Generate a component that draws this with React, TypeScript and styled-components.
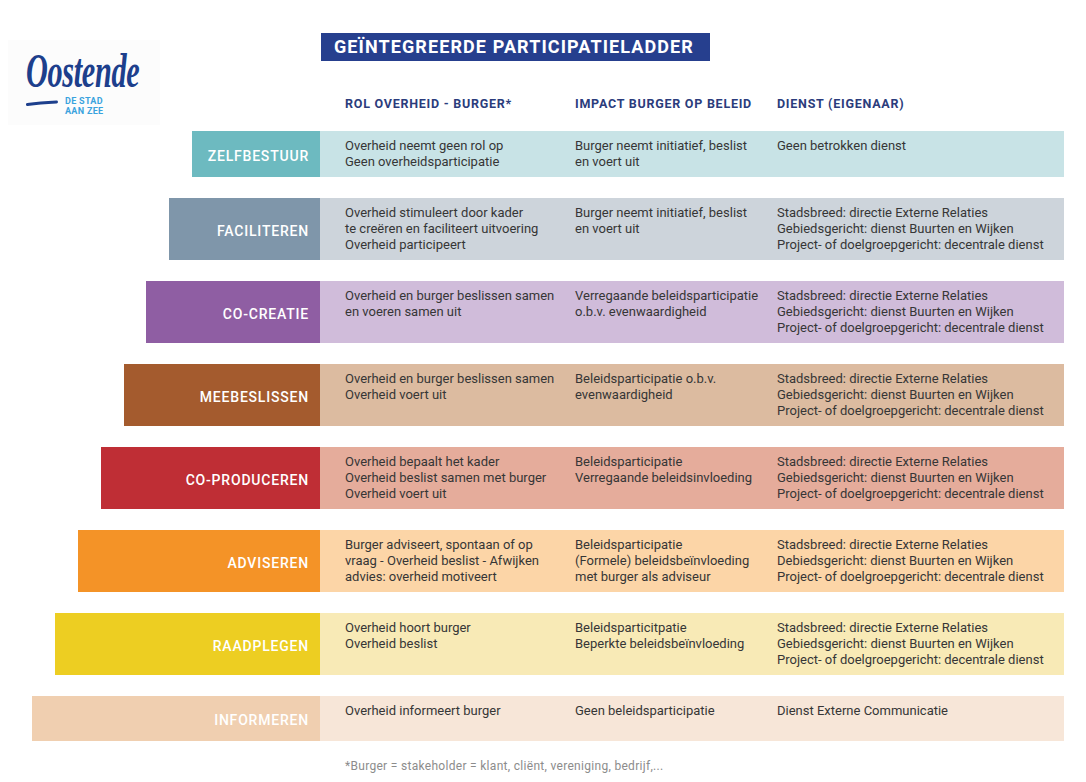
import React from "react";
import styled, { createGlobalStyle } from "styled-components";

const Global = createGlobalStyle`
  html, body { margin: 0; padding: 0; background: #ffffff; }
  body { font-family: Roboto, "Noto Sans", sans-serif; }
`;

const Page = styled.div`
  width: 1086px;
  height: 782px;
  display: flex;
  flex-direction: column;
  box-sizing: border-box;
`;

const Header = styled.div`
  height: 132px;
  display: flex;
`;

const LogoBox = styled.div`
  width: 152px;
  height: 85px;
  margin: 40px 0 0 8px;
  background: #fcfcfc;
  display: flex;
  flex-direction: column;
  align-items: flex-start;
  padding: 10px 0 0 18px;
  box-sizing: border-box;
`;

const LogoWord = styled.div`
  font-family: "Liberation Serif", "DejaVu Serif", serif;
  font-style: italic;
  font-weight: 700;
  font-size: 48px;
  line-height: 42px;
  letter-spacing: -0.5px;
  color: #1d3f8c;
  transform: scaleX(0.63);
  transform-origin: left center;
  white-space: nowrap;
`;

const LogoBottom = styled.div`
  display: flex;
  align-items: flex-start;
  gap: 7px;
  margin-top: 5px;
`;

const LogoSwoosh = styled.svg`
  display: block;
  margin-top: 3px;
`;

const LogoTag = styled.div`
  font-family: Roboto, sans-serif;
  font-weight: 700;
  font-size: 9px;
  line-height: 9.5px;
  letter-spacing: 0.3px;
  color: #3aa3de;
`;

const HeaderRight = styled.div`
  margin-left: 160px;
  display: flex;
  flex-direction: column;
`;

const Title = styled.h1`
  margin: 33px 0 0 1px;
  width: 389px;
  height: 28px;
  box-sizing: border-box;
  padding-left: 13px;
  background: #263f8e;
  color: #ffffff;
  font-family: Roboto, sans-serif;
  font-weight: 700;
  font-size: 18px;
  line-height: 28px;
  letter-spacing: 1.1px;
  white-space: nowrap;
`;

const ColHeads = styled.div`
  margin-top: 35px;
  display: grid;
  grid-template-columns: 230px 202px 312px;
`;

const ColHead = styled.div`
  padding-left: 25px;
  font-family: Roboto, sans-serif;
  font-weight: 700;
  font-size: 12.5px;
  line-height: 16px;
  letter-spacing: 0.75px;
  color: #2b3c7c;
  white-space: nowrap;
`;

const Rows = styled.div`
  display: flex;
  flex-direction: column;
  gap: 21px;
`;

const Row = styled.div<{ $first?: boolean; $h: number }>`
  display: flex;
  height: ${(p) => p.$h}px;
  margin-top: ${(p) => (p.$first ? "-1px" : "0")};
`;

const LabelSlot = styled.div`
  width: 320px;
  display: flex;
  justify-content: flex-end;
`;

const Label = styled.div<{ $w: number; $c: string }>`
  width: ${(p) => p.$w}px;
  background: ${(p) => p.$c};
  display: flex;
  align-items: center;
  justify-content: flex-end;
  padding: 3px 11px 0 0;
  box-sizing: border-box;
  color: #ffffff;
  font-family: Roboto, sans-serif;
  font-weight: 500;
  font-size: 14px;
  letter-spacing: 0.8px;
  white-space: nowrap;
`;

const Content = styled.div<{ $bg: string }>`
  width: 744px;
  background: ${(p) => p.$bg};
  display: grid;
  grid-template-columns: 230px 202px 312px;
`;

const Cell = styled.div`
  padding: 7px 0 0 25px;
  font-family: Roboto, sans-serif;
  font-size: 13px;
  line-height: 16px;
  letter-spacing: 0px;
  color: #363636;
  white-space: nowrap;
`;

const Footnote = styled.div`
  margin: 17px 0 0 345px;
  font-family: Roboto, sans-serif;
  font-size: 12px;
  line-height: 16px;
  letter-spacing: 0.3px;
  color: #8c8c8c;
`;

type RowData = {
  label: string;
  w: number;
  c: string;
  bg: string;
  h: number;
  cols: string[][];
};

const SB = [
  "Stadsbreed: directie Externe Relaties",
  "Gebiedsgericht: dienst Buurten en Wijken",
  "Project- of doelgroepgericht: decentrale dienst",
];

const rows: RowData[] = [
  {
    label: "ZELFBESTUUR",
    w: 128,
    c: "#6dbac0",
    bg: "#c8e3e6",
    h: 46,
    cols: [
      ["Overheid neemt geen rol op", "Geen overheidsparticipatie"],
      ["Burger neemt initiatief, beslist", "en voert uit"],
      ["Geen betrokken dienst"],
    ],
  },
  {
    label: "FACILITEREN",
    w: 151,
    c: "#7f96aa",
    bg: "#cdd4db",
    h: 62,
    cols: [
      ["Overheid stimuleert door kader", "te creëren en faciliteert uitvoering", "Overheid participeert"],
      ["Burger neemt initiatief, beslist", "en voert uit"],
      SB,
    ],
  },
  {
    label: "CO-CREATIE",
    w: 174,
    c: "#8f5ea3",
    bg: "#d0bcda",
    h: 62,
    cols: [
      ["Overheid en burger beslissen samen", "en voeren samen uit"],
      ["Verregaande beleidsparticipatie", "o.b.v. evenwaardigheid"],
      SB,
    ],
  },
  {
    label: "MEEBESLISSEN",
    w: 196,
    c: "#a45b2e",
    bg: "#dcbba0",
    h: 62,
    cols: [
      ["Overheid en burger beslissen samen", "Overheid voert uit"],
      ["Beleidsparticipatie o.b.v.", "evenwaardigheid"],
      SB,
    ],
  },
  {
    label: "CO-PRODUCEREN",
    w: 219,
    c: "#bf2e35",
    bg: "#e5ac9b",
    h: 62,
    cols: [
      ["Overheid bepaalt het kader", "Overheid beslist samen met burger", "Overheid voert uit"],
      ["Beleidsparticipatie", "Verregaande beleidsinvloeding"],
      SB,
    ],
  },
  {
    label: "ADVISEREN",
    w: 242,
    c: "#f49327",
    bg: "#fcd5a7",
    h: 62,
    cols: [
      ["Burger adviseert, spontaan of op", "vraag - Overheid beslist - Afwijken", "advies: overheid motiveert"],
      ["Beleidsparticipatie", "(Formele) beleidsbeïnvloeding", "met burger als adviseur"],
      [
        "Stadsbreed: directie Externe Relaties",
        "Debiedsgericht: dienst Buurten en Wijken",
        "Project- of doelgroepgericht: decentrale dienst",
      ],
    ],
  },
  {
    label: "RAADPLEGEN",
    w: 265,
    c: "#edce22",
    bg: "#f8eab6",
    h: 62,
    cols: [
      ["Overheid hoort burger", "Overheid beslist"],
      ["Beleidsparticitpatie", "Beperkte beleidsbeïnvloeding"],
      SB,
    ],
  },
  {
    label: "INFORMEREN",
    w: 288,
    c: "#f0cfb0",
    bg: "#f7e6d8",
    h: 45,
    cols: [["Overheid informeert burger"], ["Geen beleidsparticipatie"], ["Dienst Externe Communicatie"]],
  },
];

export default function App() {
  return (
    <Page>
      <Global />
      <Header>
        <LogoBox>
          <LogoWord>Oostende</LogoWord>
          <LogoBottom>
            <LogoSwoosh width="32" height="6" viewBox="0 0 32 6">
              <path d="M1.5 4.5 C 10 3.2, 20 2.4, 30.5 2" stroke="#1d3f8c" strokeWidth="3" strokeLinecap="round" fill="none" />
            </LogoSwoosh>
            <LogoTag>
              DE STAD
              <br />
              AAN ZEE
            </LogoTag>
          </LogoBottom>
        </LogoBox>
        <HeaderRight>
          <Title>GEÏNTEGREERDE PARTICIPATIELADDER</Title>
          <ColHeads>
            <ColHead>ROL OVERHEID - BURGER*</ColHead>
            <ColHead>IMPACT BURGER OP BELEID</ColHead>
            <ColHead>DIENST (EIGENAAR)</ColHead>
          </ColHeads>
        </HeaderRight>
      </Header>
      <Rows>
        {rows.map((r, i) => (
          <Row key={r.label} $h={r.h} $first={i === 0}>
            <LabelSlot>
              <Label $w={r.w} $c={r.c}>
                {r.label}
              </Label>
            </LabelSlot>
            <Content $bg={r.bg}>
              {r.cols.map((lines, j) => (
                <Cell key={j}>
                  {lines.map((l, k) => (
                    <div key={k}>{l}</div>
                  ))}
                </Cell>
              ))}
            </Content>
          </Row>
        ))}
      </Rows>
      <Footnote>*Burger = stakeholder = klant, cliënt, vereniging, bedrijf,...</Footnote>
    </Page>
  );
}
